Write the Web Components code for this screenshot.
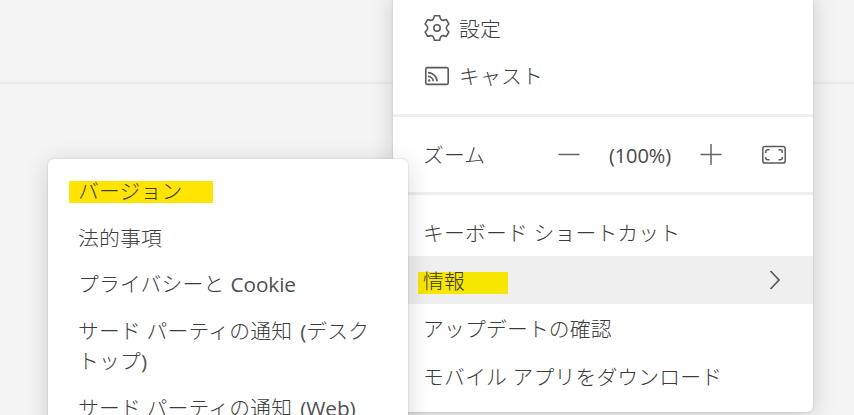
<!DOCTYPE html>
<html lang="ja">
<head>
<meta charset="utf-8">
<title>メニュー</title>
<style>
html,body{margin:0;width:854px;height:415px;overflow:hidden;background:#f4f4f4}
</style>
</head>
<body>
<app-page></app-page>
<script>
const define = (name, html) => {
  const template = document.createElement('template');
  template.innerHTML = html;
  customElements.define(name, class extends HTMLElement {
    constructor() {
      super();
      this.attachShadow({mode: 'open'}).append(template.content.cloneNode(true));
    }
  });
};

define('menu-item', `
<style>
:host{display:flex;align-items:center;height:48px;padding:0 24px 0 30px;box-sizing:border-box;white-space:nowrap}
:host([selected]){background:#efefef}
:host([low]){padding-top:2px}
::slotted(svg){flex:none;margin:0 9px 0 1px}
::slotted(svg[slot=end]){margin:0 1px 0 auto}
</style>
<slot></slot><slot name="end"></slot>`);

define('menu-divider', `
<style>:host{display:block;height:3px;background:#efefef}</style>`);

define('marked-text', `
<style>
:host{display:block;box-sizing:border-box;height:22px;line-height:23px;background:var(--mark,#ffe400)}
</style>
<slot></slot>`);

define('sub-item', `
<style>
:host{display:block;padding:8.3px 32px 8.3px 30px;line-height:30px}
::slotted(span){font-weight:400;color:#505050;letter-spacing:-.1px}
</style>
<slot></slot>`);

define('zoom-row', `
<style>
:host{display:flex;align-items:center;height:75px;padding:0 27px 0 30px;box-sizing:border-box}
.label{width:135px}
.value{width:64px;margin:2px 28px 0 28px;font-weight:400;color:#484848;font-size:20px;letter-spacing:-.1px;text-align:center;white-space:nowrap}
svg{flex:none}
.full{margin-left:auto}
</style>
<div class="label"><slot></slot></div>
<svg width="22" height="22" fill="none" stroke="#666" stroke-width="1.5"><path d="M0.5 10.5H21.5"/></svg>
<div class="value"><slot name="value"></slot></div>
<svg width="22" height="22" fill="none" stroke="#666" stroke-width="1.5"><path d="M0.5 10.5H21.5M11 0V21"/></svg>
<svg class="full" width="24" height="20" fill="none" stroke="#5a5a5a" stroke-width="1.5"><rect x=".8" y="1.5" width="22.4" height="16.6" rx="2.2"/><path d="M3.8 8V6.8Q3.8 4.8 5.8 4.8H7.5M16.5 4.8H18.2Q20.2 4.8 20.2 6.8V8M20.2 12V12.8Q20.2 14.8 18.2 14.8H16.5M7.5 14.8H5.8Q3.8 14.8 3.8 12.8V12"/></svg>`);

define('menu-panel', `
<style>
:host{display:block;box-sizing:border-box;background:#fff;border-radius:6px;box-shadow:0 0 2px rgba(0,0,0,.18),0 5px 24px rgba(0,0,0,.16)}
</style>
<slot></slot>`);

define('app-page', `
<style>
:host{display:block;position:relative;width:854px;height:415px;overflow:hidden;color:#3c3c3c;
 font:300 20.8px/30px "Open Sans","Noto Sans CJK JP",sans-serif;letter-spacing:.18px}
.top{height:82px;border-bottom:2px solid #e9e9e9}
.main{position:absolute;left:393px;top:-10px;width:420px;height:422px;padding-top:15px}
.sub{position:absolute;left:48px;top:159px;width:360px;height:300px;padding-top:9px}
.gap{height:13px}
.m1{width:90px;margin-left:-5px;padding-left:5px;margin-top:5px;--mark:#f7e600;line-height:18px}
.m2{width:144px;margin:5px 0 3px -9px;padding-left:9px;line-height:20px}
.word{margin-left:.5px}
.paren{margin-left:2.5px}
</style>
<div class="top"></div>
<menu-panel class="main">
 <menu-item><svg width="26" height="28" viewBox="-13 -13 26 28" fill="none" stroke="#5a5a5a" stroke-width="1.6" stroke-linejoin="round"><path d="M-2.6-12.2H2.6L3.4-9.4Q4.3-7.45 6.44-7.64L9.44-8.45L11.9-3.95L9.84-1.76Q8.6 0 9.84 1.76L11.9 3.95L9.44 8.45L6.44 7.64Q4.3 7.45 3.4 9.4L2.6 12.2H-2.6L-3.4 9.4Q-4.3 7.45-6.44 7.64L-9.44 8.45L-11.9 3.95L-9.84 1.76Q-8.6 0-9.84-1.76L-11.9-3.95L-9.44-8.45L-6.44-7.64Q-4.3-7.45-3.4-9.4Z"/><circle r="3.2"/></svg>設定</menu-item>
 <menu-item style="padding-bottom:2px"><svg width="26" height="20" fill="none" stroke="#5a5a5a" stroke-width="1.6"><rect x="1.8" y="1.6" width="22.4" height="16.8" rx="1.5"/><path d="M4 6.6A9 9 0 0 1 13 15.3M4 10.4A5.2 5.2 0 0 1 9.2 15.3"/><circle cx="5.2" cy="14.4" r="1.2" fill="#5a5a5a" stroke="none"/></svg>キャスト</menu-item>
 <div class="gap"></div><menu-divider></menu-divider>
 <zoom-row>ズーム<span slot="value">(100%)</span></zoom-row>
 <menu-divider></menu-divider><div class="gap"></div>
 <menu-item low>キーボード ショートカット</menu-item>
 <menu-item selected><marked-text class="m1">情報</marked-text><svg slot="end" width="26" height="22" fill="none" stroke="#5a5a5a" stroke-width="1.7"><path d="M8.5 2L17 11L8.5 20"/></svg></menu-item>
 <menu-item low>アップデートの確認</menu-item>
 <menu-item low>モバイル アプリをダウンロード</menu-item>
</menu-panel>
<menu-panel class="sub">
 <sub-item><marked-text class="m2">バージョン</marked-text></sub-item>
 <sub-item>法的事項</sub-item>
 <sub-item>プライバシーと <span class="word">Cookie</span></sub-item>
 <sub-item>サード パーティの通知 <span class="paren">(</span>デスクトップ<span>)</span></sub-item>
 <sub-item>サード パーティの通知 <span class="paren">(Web)</span></sub-item>
</menu-panel>`);
</script>
</body>
</html>
